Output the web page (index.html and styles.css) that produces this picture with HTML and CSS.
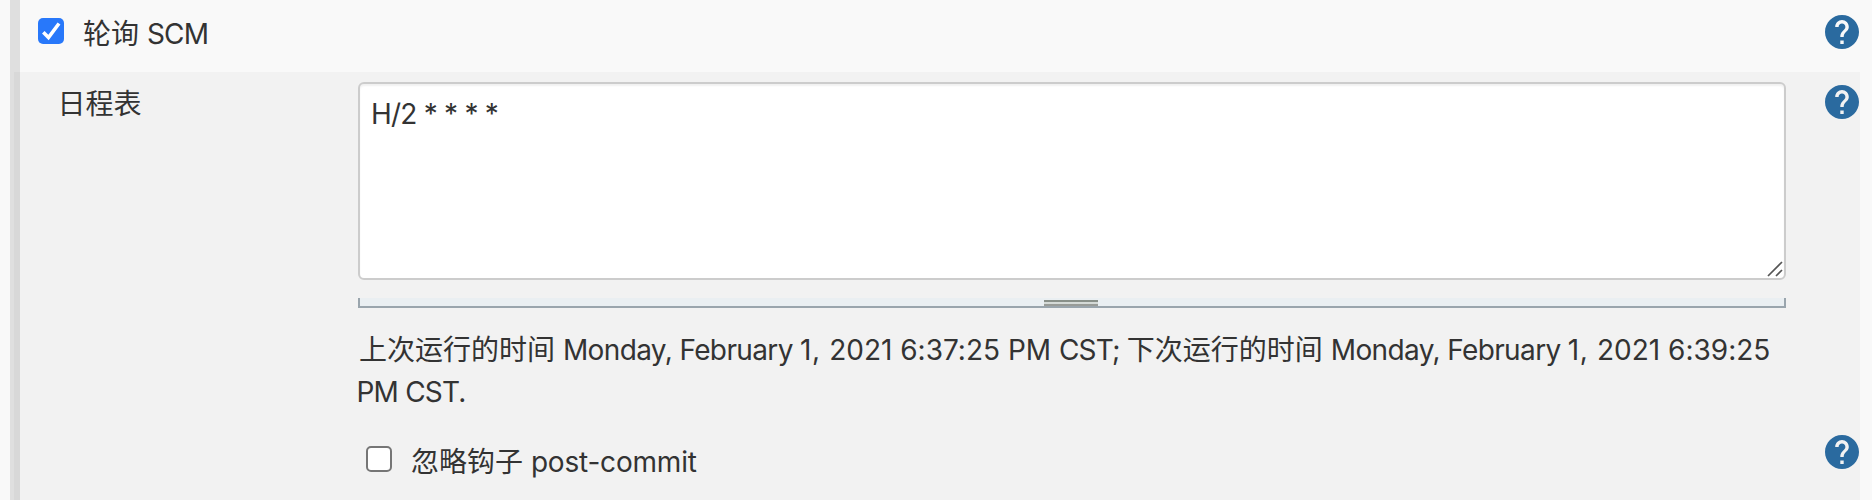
FILE: index.html
```html
<!DOCTYPE html>
<html lang="zh-CN">
<head>
<meta charset="utf-8">
<title>轮询 SCM</title>
<link rel="stylesheet" href="styles.css">
</head>
<body>
<svg class="defs" aria-hidden="true">
  <symbol id="help" viewBox="2 2 20 20"><path d="M12 2C6.48 2 2 6.48 2 12s4.48 10 10 10 10-4.48 10-10S17.520 2 12 2zm1 17h-2v-2h2v2zm2.070-7.750l-.9.920C13.450 12.900 13 13.500 13 15h-2v-.5c0-1.100.450-2.100 1.170-2.830l1.240-1.260c.370-.360.590-.860.590-1.410 0-1.100-.9-2-2-2s-2 .9-2 2H8c0-2.210 1.790-4 4-4s4 1.790 4 4c0 .880-.360 1.680-.930 2.250z"/></symbol>
</svg>
<main class="block">
  <div class="trigger">
    <span class="checkbox checked"><svg viewBox="0 0 26 26"><path d="M5.300 14.300l5.200 5.200L21 5.500"/></svg></span>
    <label class="trigger-label">轮询 <span class="caps">SCM</span></label>
    <svg class="help"><use href="#help"/></svg>
  </div>
  <section class="panel">
    <div class="name">日程表</div>
    <div class="setting">
      <div class="textarea"><span class="cron">H/2 * * * *</span>
        <svg class="resizer" viewBox="0 0 16 16"><path d="M1 15L15 1M9 15l6-6"/></svg>
      </div>
      <div class="handle"><span class="grip"></span></div>
      <p class="times"><span class="lead">上次运行的时间</span> <span class="words">Monday, February </span><span class="day">1, </span>2021 6:37:25 PM <span class="caps">CST; </span>下次运行的时间 <span class="words">Monday, February </span><span class="day">1, </span>2021 6:39:25<br><span class="caps tail">PM CST.</span></p>
      <div class="option"><span class="checkbox"></span><label>忽略钩子 <span class="post">post-commit</span></label></div>
    </div>
    <div class="helps">
      <svg class="help"><use href="#help"/></svg>
      <svg class="help"><use href="#help"/></svg>
    </div>
  </section>
</main>
</body>
</html>
```
FILE: styles.css
```css
* { box-sizing: border-box; }
body {
  margin: 0;
  height: 500px;
  overflow: hidden;
  background: #f9f9f9;
  color: #333;
  font: 28px/42px Inter, "Noto Sans CJK SC", sans-serif;
  font-feature-settings: "calt" 0;
}
.defs { position: absolute; width: 0; height: 0; }
.block {
  height: 500px;
  margin-left: 10px;
  border-left: 10px solid #dfdfdf;
}
.trigger {
  display: flex;
  align-items: flex-start;
  height: 72px;
  padding: 13px 12px 0 18px;
}
.trigger-label { flex: 1; margin-left: 19px; }
.caps { letter-spacing: -.8px; }
.words { letter-spacing: -.63px; }
.day { letter-spacing: .6px; }
.cron { letter-spacing: -.78px; }
.post { letter-spacing: -.2px; }
.checkbox {
  flex: none;
  width: 26px;
  height: 26px;
  border: 2px solid #767676;
  border-radius: 5px;
  background: #fff;
}
.checked { margin-top: 5px; border: 0; background: #2878fa; }
.checked svg { display: block; width: 26px; height: 26px; }
.checked path { fill: none; stroke: #fff; stroke-width: 3.600; }
.help { display: block; flex: none; width: 34px; height: 34px; fill: #2a6a9f; }
.trigger .help { margin: 2px 1px 0 0; }
.panel {
  display: grid;
  grid-template-columns: 344px 1428px 1fr;
  height: 428px;
  margin: 0 12px 0 -6px;
  background: rgba(0, 0, 0, .026);
}
.name { padding: 11px 0 0 43.500px; }
.setting { padding-top: 10px; }
.textarea {
  position: relative;
  height: 198px;
  padding: 9px 11px;
  border: 2px solid #ccc;
  border-radius: 6px;
  background: #fff;
  box-shadow: inset 0 2px 2px rgba(0, 0, 0, .06);
}
.resizer {
  position: absolute;
  right: 1px;
  bottom: 1px;
  width: 16px;
  height: 16px;
  fill: none;
  stroke: #555;
  stroke-width: 1.700;
}
.handle {
  display: flex;
  justify-content: center;
  height: 10px;
  margin-top: 18px;
  padding: 2px 2px 0 0;
  border: 2px solid #9aa5ad;
  border-top: 0;
  background: #eaeff2;
}
.grip {
  width: 54px;
  height: 6px;
  border-top: 2px solid #899089;
  border-bottom: 2px solid #999c98;
  background: #d5dad7;
}
.times { margin: 21px 0 0; white-space: nowrap; }
.lead { margin-left: 1px; }
.tail { margin-left: -1.500px; }
.option { display: flex; margin-top: 28px; padding-left: 8px; }
.option .checkbox { margin: 5px 19px 0 0; }
.helps {
  display: flex;
  flex-direction: column;
  align-items: flex-end;
  gap: 316px;
  padding: 13px 1px 0 0;
}
```
